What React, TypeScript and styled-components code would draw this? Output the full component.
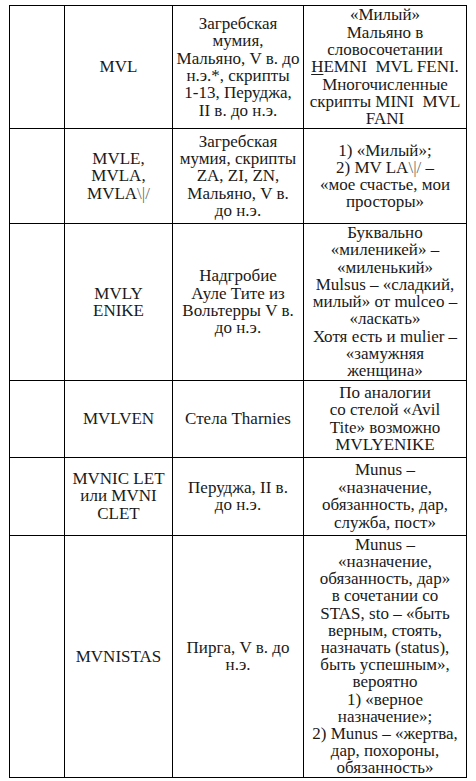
import React from "react";
import styled, { createGlobalStyle } from "styled-components";

const serif = `"Liberation Serif", "Tinos", "DejaVu Serif", "Times New Roman", Times, serif`;

const GlobalStyle = createGlobalStyle`
  html, body {
    margin: 0;
    padding: 0;
    background: #fff;
  }
  body {
    font-family: ${serif};
    color: #1a1a1a;
  }
`;

const Page = styled.div`
  padding: 5px 0 0 9px;
`;

const Table = styled.table`
  border-collapse: collapse;
  table-layout: fixed;
  width: 457px;
  font-family: ${serif};
  font-size: 17px;
  color: #1a1a1a;
`;

const Row = styled.tr<{ $h: number; $lh: number }>`
  height: ${(p) => p.$h}px;
  line-height: ${(p) => p.$lh}px;
`;

const Cell = styled.td`
  border: 1px solid #000;
  padding: 0 3px;
  text-align: center;
  vertical-align: middle;
  white-space: nowrap;
  font-family: ${serif};
`;

const Glyph = styled.span`
  color: #6b6b6b;
`;

const Under = styled.span`
  text-decoration: underline;
  text-underline-offset: 2px;
`;

const lines = (arr: React.ReactNode[]) =>
  arr.map((l, i) => (
    <React.Fragment key={i}>
      {i > 0 && <br />}
      {l}
    </React.Fragment>
  ));

const rows = [
  {
    h: 123,
    lh: 17.3,
    word: ["MVL"],
    source: ["Загребская", "мумия,", "Мальяно, V в. до", "н.э.*, скрипты", "1-13, Перуджа,", "II в. до н.э."],
    meaning: [
      "«Милый»",
      "Мальяно в",
      "словосочетании",
      <>
        <Under>H</Under>EMNI{"\u00a0\u00a0"}MVL FENI.
      </>,
      "Многочисленные",
      "скрипты MINI\u00a0\u00a0MVL",
      "FANI",
    ],
  },
  {
    h: 95,
    lh: 17.2,
    word: [
      "MVLE,",
      "MVLA,",
      <>
        MVLA<Glyph>\|/</Glyph>
      </>,
    ],
    source: ["Загребская", "мумия, скрипты", "ZA, ZI, ZN,", "Мальяно, V в.", "до н.э."],
    meaning: [
      "1) «Милый»;",
      <>
        2) MV LA<Glyph>\|/</Glyph> –
      </>,
      "«мое счастье, мои",
      "просторы»",
    ],
  },
  {
    h: 156,
    lh: 17.3,
    word: ["MVLY", "ENIKE"],
    source: ["Надгробие", "Ауле Тите из", "Вольтерры V в.", "до н.э."],
    meaning: [
      "Буквально",
      "«миленикей» –",
      "«миленький»",
      "Mulsus – «сладкий,",
      "милый» от mulceo –",
      "«ласкать»",
      "Хотя есть и mulier –",
      "«замужняя",
      "женщина»",
    ],
  },
  {
    h: 77,
    lh: 17.4,
    word: ["MVLVEN"],
    source: ["Стела Tharnies"],
    meaning: ["По аналогии", "со стелой «Avil", "Tite» возможно", "MVLYENIKE"],
  },
  {
    h: 78,
    lh: 17.6,
    word: ["MVNIC LET", "или MVNI", "CLET"],
    source: ["Перуджа, II в.", "до н.э."],
    meaning: ["Munus –", "«назначение,", "обязанность, дар,", "служба, пост»"],
  },
  {
    h: 242,
    lh: 17.2,
    word: ["MVNISTAS"],
    source: ["Пирга, V в. до", "н.э."],
    meaning: [
      "Munus –",
      "«назначение,",
      "обязанность, дар»",
      "в сочетании со",
      "STAS, sto – «быть",
      "верным, стоять,",
      "назначать (status),",
      "быть успешным»,",
      "вероятно",
      "1) «верное",
      "назначение»;",
      "2) Munus – «жертва,",
      "дар, похороны,",
      "обязанность»",
    ],
  },
];

export default function App() {
  return (
    <Page>
      <GlobalStyle />
      <Table>
        <colgroup>
          <col style={{ width: 55 }} />
          <col style={{ width: 108 }} />
          <col style={{ width: 131 }} />
          <col style={{ width: 163 }} />
        </colgroup>
        <tbody>
          {rows.map((r, i) => (
            <Row key={i} $h={r.h} $lh={r.lh}>
              <Cell />
              <Cell>{lines(r.word)}</Cell>
              <Cell>{lines(r.source)}</Cell>
              <Cell>{lines(r.meaning)}</Cell>
            </Row>
          ))}
        </tbody>
      </Table>
    </Page>
  );
}
